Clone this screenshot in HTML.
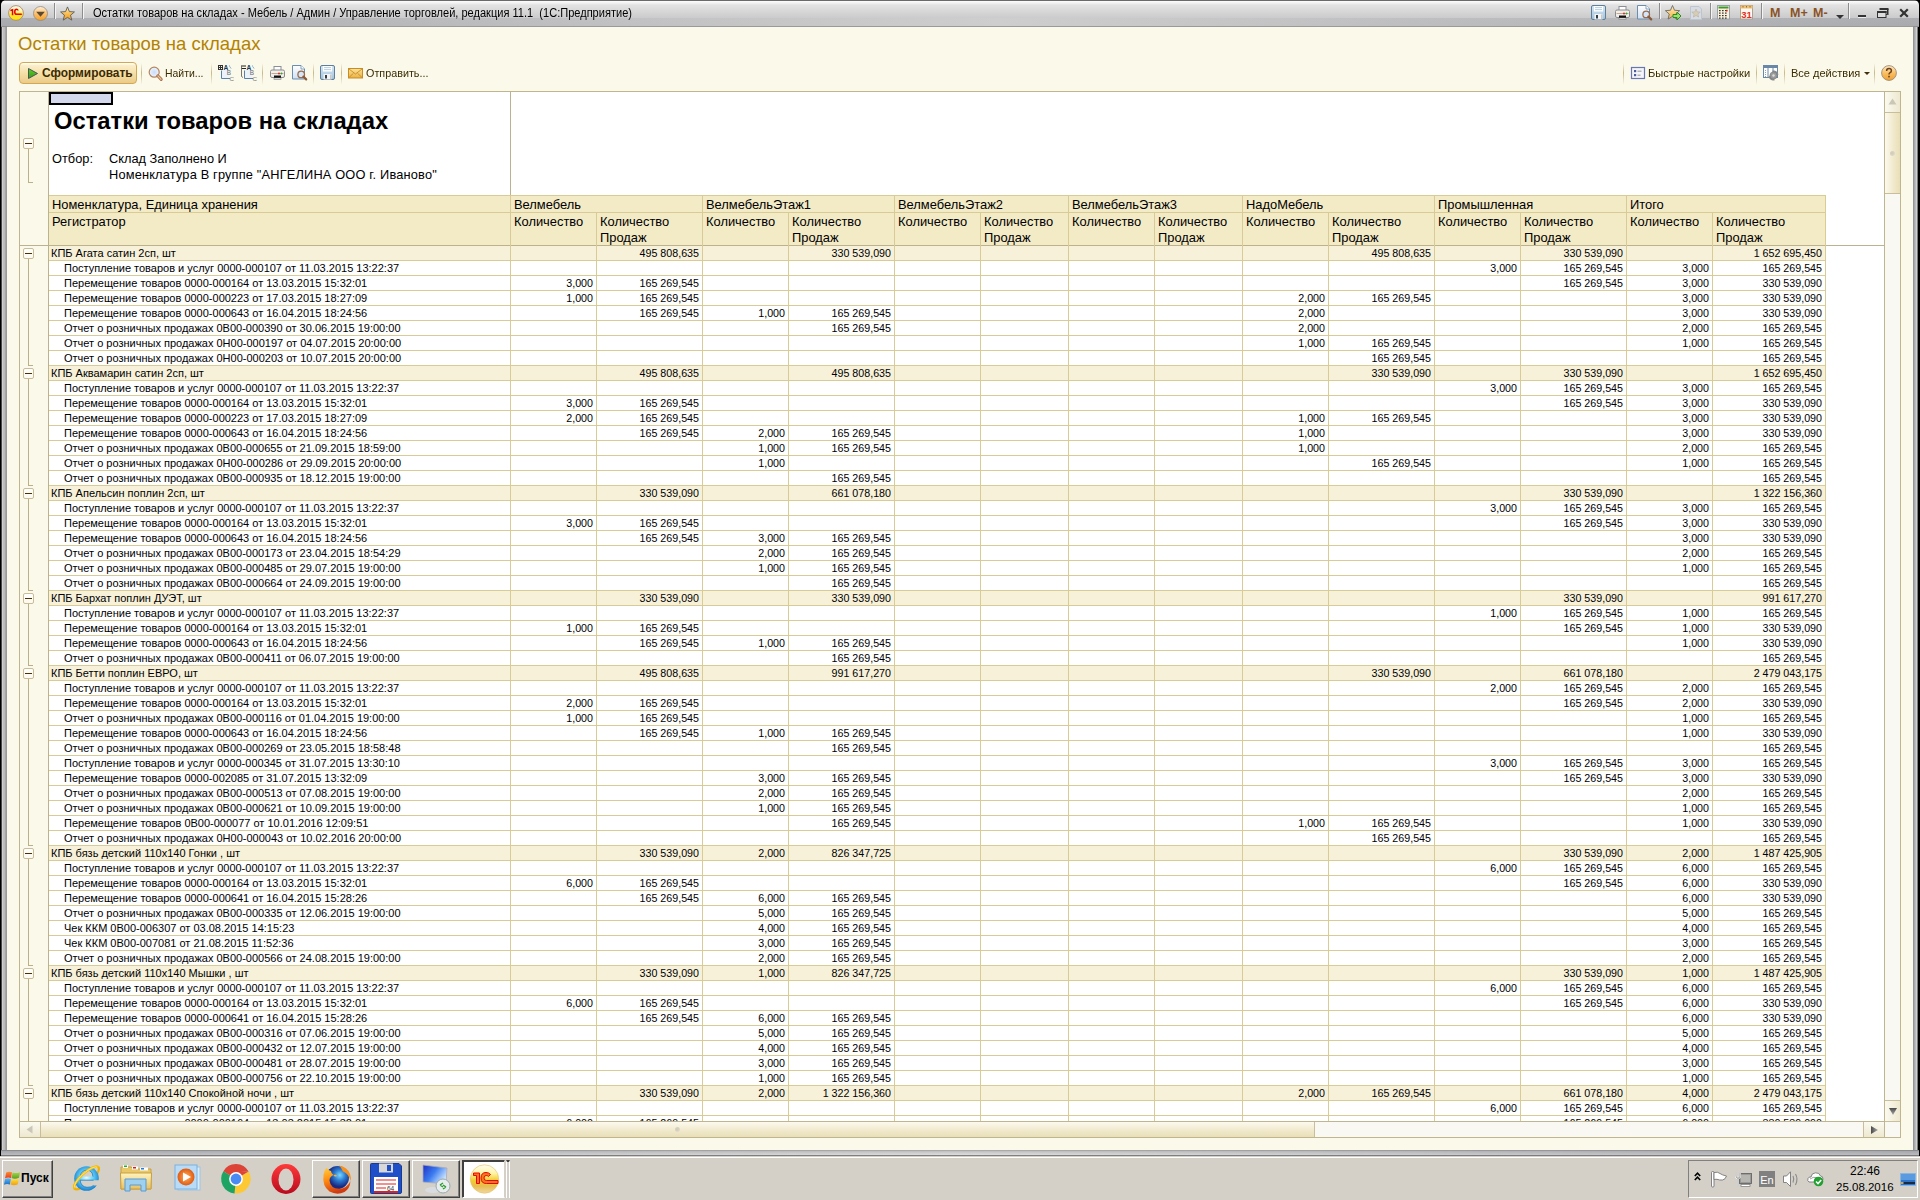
<!DOCTYPE html>
<html><head><meta charset="utf-8"><style>
html,body{margin:0;padding:0}
body{width:1920px;height:1200px;overflow:hidden;position:relative;background:#D4D0C8;font-family:"Liberation Sans",sans-serif;color:#000}
div{position:absolute;box-sizing:border-box}
.t{white-space:pre;line-height:15px;font-size:11px}
.r{text-align:right}
svg{position:absolute;overflow:visible}
</style></head><body>

<div style="left:0px;top:0px;width:1920px;height:1156px;background:#000"></div>
<div style="left:1px;top:0px;width:1917px;height:1156px;background:linear-gradient(90deg,#4a4a4a 0,#4a4a4a 1px,#d0d0d0 1px,#d0d0d0 2px,#c2c2c2 2px,#b8b8b8 4px,#a6a6a8 4px,#a6a6a8 5px,#9a9b9f 5px,#9a9b9f 6px,#a9aaae 6px);border-radius:6px 6px 0 0"></div>
<div style="left:1913px;top:27px;width:5px;height:1129px;background:linear-gradient(90deg,#959599 0,#959599 1px,#a8a9ad 1px,#a8a9ad 2px,#b8b9bb 2px,#b8b9bb 3px,#d0d0d0 3px,#d0d0d0 4px,#7a7a7a 4px)"></div>
<div style="left:1px;top:1150px;width:1918px;height:6px;background:linear-gradient(180deg,#8a8b8f 0,#8a8b8f 1px,#a6a7ab 1px,#babbbf 5px,#7a7a7c 5px)"></div>
<div style="left:1px;top:1150px;width:1918px;height:6px;background:linear-gradient(180deg,#ababad 0,#ababad 1px,#bebebe 1px,#d0d0d0 3px,#dddddd 5px,#808080 5px);-webkit-mask-image:linear-gradient(90deg,transparent 0%,#000 50%,transparent 100%)"></div>
<div style="left:1px;top:0px;width:1918px;height:27px;background:linear-gradient(180deg,#6a6a6a 0,#6a6a6a 1px,#fdfdfd 1px,#f2f2f2 3px,#e2e2e2 5px,#d6d6d6 12px,#cbcbcd 18px,#adaeb2 18px,#a9aaae 26px,#8f9094 26px);border-radius:5px 5px 0 0"></div>
<div style="left:1px;top:18px;width:1918px;height:9px;background:linear-gradient(90deg,rgba(206,206,206,0) 0%,rgba(206,206,206,1) 52%,rgba(206,206,206,0) 100%)"></div>
<div style="left:7px;top:26px;width:1906px;height:1px;background:#9a9a9c"></div>
<div style="left:7px;top:27px;width:1906px;height:1123px;background:#FBF9EA"></div>
<div style="left:0px;top:1156px;width:1920px;height:44px;background:#D4D0C8;border-top:1px solid #d4d0c8"></div>
<div style="left:0px;top:1157px;width:1920px;height:1px;background:#fff"></div>
<div class="t" style="left:93px;top:5px;font-size:12.5px;line-height:16px;color:#000;transform:scaleX(0.884);transform-origin:0 0">Остатки товаров на складах - Мебель / Админ / Управление торговлей, редакция 11.1  (1С:Предприятие)</div>
<div class="t" style="left:18px;top:33px;font-size:18.5px;line-height:22px;color:#B38200">Остатки товаров на складах</div>
<div style="left:19px;top:62px;width:118px;height:22px;border:1px solid #D4A852;border-radius:4px;background:linear-gradient(180deg,#FFFDF4 0,#FFFDF4 1px,#FBEFCC 2px,#F5E0A8 50%,#EACB88 100%)"></div>
<div class="t" style="left:42px;top:66px;font-size:11.9px;font-weight:bold;color:#3B2A00">Сформировать</div>
<div class="t" style="left:165px;top:65px;font-size:11.6px;color:#3A2C00;transform:scaleX(0.9);transform-origin:0 0">Найти...</div>
<div class="t" style="left:366px;top:65px;font-size:11.6px;color:#3A2C00;transform:scaleX(0.93);transform-origin:0 0">Отправить...</div>
<div class="t" style="left:1648px;top:65px;font-size:11.6px;color:#3A2C00;transform:scaleX(0.96);transform-origin:0 0">Быстрые настройки</div>
<div class="t" style="left:1791px;top:65px;font-size:11.6px;color:#3A2C00;transform:scaleX(0.95);transform-origin:0 0">Все действия</div>
<div style="left:141px;top:63px;width:1px;height:22px;background:linear-gradient(180deg,rgba(200,184,136,0) 0,#C9B98A 45%,rgba(200,184,136,0) 100%)"></div>
<div style="left:211px;top:63px;width:1px;height:22px;background:linear-gradient(180deg,rgba(200,184,136,0) 0,#C9B98A 45%,rgba(200,184,136,0) 100%)"></div>
<div style="left:262px;top:63px;width:1px;height:22px;background:linear-gradient(180deg,rgba(200,184,136,0) 0,#C9B98A 45%,rgba(200,184,136,0) 100%)"></div>
<div style="left:313px;top:63px;width:1px;height:22px;background:linear-gradient(180deg,rgba(200,184,136,0) 0,#C9B98A 45%,rgba(200,184,136,0) 100%)"></div>
<div style="left:341px;top:63px;width:1px;height:22px;background:linear-gradient(180deg,rgba(200,184,136,0) 0,#C9B98A 45%,rgba(200,184,136,0) 100%)"></div>
<div style="left:1623px;top:63px;width:1px;height:22px;background:linear-gradient(180deg,rgba(200,184,136,0) 0,#C9B98A 45%,rgba(200,184,136,0) 100%)"></div>
<div style="left:1756px;top:63px;width:1px;height:22px;background:linear-gradient(180deg,rgba(200,184,136,0) 0,#C9B98A 45%,rgba(200,184,136,0) 100%)"></div>
<div style="left:1784px;top:63px;width:1px;height:22px;background:linear-gradient(180deg,rgba(200,184,136,0) 0,#C9B98A 45%,rgba(200,184,136,0) 100%)"></div>
<div style="left:1874px;top:63px;width:1px;height:22px;background:linear-gradient(180deg,rgba(200,184,136,0) 0,#C9B98A 45%,rgba(200,184,136,0) 100%)"></div>
<div style="left:19px;top:91px;width:1882px;height:1047px;border:1px solid #BFB68F;background:#fff"></div>
<div style="left:20px;top:92px;width:28px;height:1029px;background:#FBF9EA"></div>
<div style="left:48px;top:92px;width:1px;height:1029px;background:#BCB38E"></div>
<div style="left:20px;top:92px;width:1865px;height:1029px;overflow:hidden">
<div style="left:29px;top:0px;width:64px;height:13px;border:2px solid #000;background:#D3D8EC"></div>
<div class="t" style="left:34px;top:14px;font-size:23.75px;font-weight:bold;line-height:30px">Остатки товаров на складах</div>
<div class="t" style="left:32px;top:59px;font-size:12.8px;line-height:16px">Отбор:</div>
<div class="t" style="left:89px;top:59px;font-size:12.8px;line-height:16px">Склад Заполнено И</div>
<div class="t" style="left:89px;top:75px;font-size:12.8px;line-height:16px;letter-spacing:0.17px">Номенклатура В группе &quot;АНГЕЛИНА ООО г. Иваново&quot;</div>
<div style="left:490px;top:0px;width:1px;height:103px;background:#BCB38E"></div>
<div style="left:29px;top:103px;width:1776px;height:50px;background:#F3EAC6"></div>
<div style="left:29px;top:103px;width:1777px;height:1px;background:#D9CB95"></div>
<div style="left:29px;top:120px;width:1777px;height:1px;background:#D9CB95"></div>
<div style="left:29px;top:154px;width:1776px;height:14px;background:#F7F1DA"></div>
<div style="left:29px;top:168px;width:1777px;height:1px;background:#D9CB95"></div>
<div style="left:29px;top:183px;width:1777px;height:1px;background:#D9CB95"></div>
<div style="left:29px;top:198px;width:1777px;height:1px;background:#D9CB95"></div>
<div style="left:29px;top:213px;width:1777px;height:1px;background:#D9CB95"></div>
<div style="left:29px;top:228px;width:1777px;height:1px;background:#D9CB95"></div>
<div style="left:29px;top:243px;width:1777px;height:1px;background:#D9CB95"></div>
<div style="left:29px;top:258px;width:1777px;height:1px;background:#D9CB95"></div>
<div style="left:29px;top:273px;width:1777px;height:1px;background:#D9CB95"></div>
<div style="left:29px;top:274px;width:1776px;height:14px;background:#F7F1DA"></div>
<div style="left:29px;top:288px;width:1777px;height:1px;background:#D9CB95"></div>
<div style="left:29px;top:303px;width:1777px;height:1px;background:#D9CB95"></div>
<div style="left:29px;top:318px;width:1777px;height:1px;background:#D9CB95"></div>
<div style="left:29px;top:333px;width:1777px;height:1px;background:#D9CB95"></div>
<div style="left:29px;top:348px;width:1777px;height:1px;background:#D9CB95"></div>
<div style="left:29px;top:363px;width:1777px;height:1px;background:#D9CB95"></div>
<div style="left:29px;top:378px;width:1777px;height:1px;background:#D9CB95"></div>
<div style="left:29px;top:393px;width:1777px;height:1px;background:#D9CB95"></div>
<div style="left:29px;top:394px;width:1776px;height:14px;background:#F7F1DA"></div>
<div style="left:29px;top:408px;width:1777px;height:1px;background:#D9CB95"></div>
<div style="left:29px;top:423px;width:1777px;height:1px;background:#D9CB95"></div>
<div style="left:29px;top:438px;width:1777px;height:1px;background:#D9CB95"></div>
<div style="left:29px;top:453px;width:1777px;height:1px;background:#D9CB95"></div>
<div style="left:29px;top:468px;width:1777px;height:1px;background:#D9CB95"></div>
<div style="left:29px;top:483px;width:1777px;height:1px;background:#D9CB95"></div>
<div style="left:29px;top:498px;width:1777px;height:1px;background:#D9CB95"></div>
<div style="left:29px;top:499px;width:1776px;height:14px;background:#F7F1DA"></div>
<div style="left:29px;top:513px;width:1777px;height:1px;background:#D9CB95"></div>
<div style="left:29px;top:528px;width:1777px;height:1px;background:#D9CB95"></div>
<div style="left:29px;top:543px;width:1777px;height:1px;background:#D9CB95"></div>
<div style="left:29px;top:558px;width:1777px;height:1px;background:#D9CB95"></div>
<div style="left:29px;top:573px;width:1777px;height:1px;background:#D9CB95"></div>
<div style="left:29px;top:574px;width:1776px;height:14px;background:#F7F1DA"></div>
<div style="left:29px;top:588px;width:1777px;height:1px;background:#D9CB95"></div>
<div style="left:29px;top:603px;width:1777px;height:1px;background:#D9CB95"></div>
<div style="left:29px;top:618px;width:1777px;height:1px;background:#D9CB95"></div>
<div style="left:29px;top:633px;width:1777px;height:1px;background:#D9CB95"></div>
<div style="left:29px;top:648px;width:1777px;height:1px;background:#D9CB95"></div>
<div style="left:29px;top:663px;width:1777px;height:1px;background:#D9CB95"></div>
<div style="left:29px;top:678px;width:1777px;height:1px;background:#D9CB95"></div>
<div style="left:29px;top:693px;width:1777px;height:1px;background:#D9CB95"></div>
<div style="left:29px;top:708px;width:1777px;height:1px;background:#D9CB95"></div>
<div style="left:29px;top:723px;width:1777px;height:1px;background:#D9CB95"></div>
<div style="left:29px;top:738px;width:1777px;height:1px;background:#D9CB95"></div>
<div style="left:29px;top:753px;width:1777px;height:1px;background:#D9CB95"></div>
<div style="left:29px;top:754px;width:1776px;height:14px;background:#F7F1DA"></div>
<div style="left:29px;top:768px;width:1777px;height:1px;background:#D9CB95"></div>
<div style="left:29px;top:783px;width:1777px;height:1px;background:#D9CB95"></div>
<div style="left:29px;top:798px;width:1777px;height:1px;background:#D9CB95"></div>
<div style="left:29px;top:813px;width:1777px;height:1px;background:#D9CB95"></div>
<div style="left:29px;top:828px;width:1777px;height:1px;background:#D9CB95"></div>
<div style="left:29px;top:843px;width:1777px;height:1px;background:#D9CB95"></div>
<div style="left:29px;top:858px;width:1777px;height:1px;background:#D9CB95"></div>
<div style="left:29px;top:873px;width:1777px;height:1px;background:#D9CB95"></div>
<div style="left:29px;top:874px;width:1776px;height:14px;background:#F7F1DA"></div>
<div style="left:29px;top:888px;width:1777px;height:1px;background:#D9CB95"></div>
<div style="left:29px;top:903px;width:1777px;height:1px;background:#D9CB95"></div>
<div style="left:29px;top:918px;width:1777px;height:1px;background:#D9CB95"></div>
<div style="left:29px;top:933px;width:1777px;height:1px;background:#D9CB95"></div>
<div style="left:29px;top:948px;width:1777px;height:1px;background:#D9CB95"></div>
<div style="left:29px;top:963px;width:1777px;height:1px;background:#D9CB95"></div>
<div style="left:29px;top:978px;width:1777px;height:1px;background:#D9CB95"></div>
<div style="left:29px;top:993px;width:1777px;height:1px;background:#D9CB95"></div>
<div style="left:29px;top:994px;width:1776px;height:14px;background:#F7F1DA"></div>
<div style="left:29px;top:1008px;width:1777px;height:1px;background:#D9CB95"></div>
<div style="left:29px;top:1023px;width:1777px;height:1px;background:#D9CB95"></div>
<div style="left:29px;top:1038px;width:1777px;height:1px;background:#D9CB95"></div>
<div style="left:0px;top:153px;width:1865px;height:1px;background:#BCB38E"></div>
<div style="left:490px;top:103px;width:1px;height:926px;background:#D9CB95"></div>
<div style="left:576px;top:120px;width:1px;height:909px;background:#D9CB95"></div>
<div style="left:682px;top:103px;width:1px;height:926px;background:#D9CB95"></div>
<div style="left:768px;top:120px;width:1px;height:909px;background:#D9CB95"></div>
<div style="left:874px;top:103px;width:1px;height:926px;background:#D9CB95"></div>
<div style="left:960px;top:120px;width:1px;height:909px;background:#D9CB95"></div>
<div style="left:1048px;top:103px;width:1px;height:926px;background:#D9CB95"></div>
<div style="left:1134px;top:120px;width:1px;height:909px;background:#D9CB95"></div>
<div style="left:1222px;top:103px;width:1px;height:926px;background:#D9CB95"></div>
<div style="left:1308px;top:120px;width:1px;height:909px;background:#D9CB95"></div>
<div style="left:1414px;top:103px;width:1px;height:926px;background:#D9CB95"></div>
<div style="left:1500px;top:120px;width:1px;height:909px;background:#D9CB95"></div>
<div style="left:1606px;top:103px;width:1px;height:926px;background:#D9CB95"></div>
<div style="left:1692px;top:120px;width:1px;height:909px;background:#D9CB95"></div>
<div style="left:1805px;top:103px;width:1px;height:926px;background:#D9CB95"></div>
<div class="t" style="left:32px;top:105px;font-size:12.9px;line-height:16px">Номенклатура, Единица хранения</div>
<div class="t" style="left:32px;top:122px;font-size:12.9px;line-height:16px">Регистратор</div>
<div class="t" style="left:494px;top:105px;font-size:12.9px;line-height:16px">Велмебель</div>
<div class="t" style="left:494px;top:122px;font-size:12.9px;line-height:16px">Количество</div>
<div class="t" style="left:580px;top:122px;font-size:12.9px;line-height:16px">Количество
Продаж</div>
<div class="t" style="left:686px;top:105px;font-size:12.9px;line-height:16px">ВелмебельЭтаж1</div>
<div class="t" style="left:686px;top:122px;font-size:12.9px;line-height:16px">Количество</div>
<div class="t" style="left:772px;top:122px;font-size:12.9px;line-height:16px">Количество
Продаж</div>
<div class="t" style="left:878px;top:105px;font-size:12.9px;line-height:16px">ВелмебельЭтаж2</div>
<div class="t" style="left:878px;top:122px;font-size:12.9px;line-height:16px">Количество</div>
<div class="t" style="left:964px;top:122px;font-size:12.9px;line-height:16px">Количество
Продаж</div>
<div class="t" style="left:1052px;top:105px;font-size:12.9px;line-height:16px">ВелмебельЭтаж3</div>
<div class="t" style="left:1052px;top:122px;font-size:12.9px;line-height:16px">Количество</div>
<div class="t" style="left:1138px;top:122px;font-size:12.9px;line-height:16px">Количество
Продаж</div>
<div class="t" style="left:1226px;top:105px;font-size:12.9px;line-height:16px">НадоМебель</div>
<div class="t" style="left:1226px;top:122px;font-size:12.9px;line-height:16px">Количество</div>
<div class="t" style="left:1312px;top:122px;font-size:12.9px;line-height:16px">Количество
Продаж</div>
<div class="t" style="left:1418px;top:105px;font-size:12.9px;line-height:16px">Промышленная</div>
<div class="t" style="left:1418px;top:122px;font-size:12.9px;line-height:16px">Количество</div>
<div class="t" style="left:1504px;top:122px;font-size:12.9px;line-height:16px">Количество
Продаж</div>
<div class="t" style="left:1610px;top:105px;font-size:12.9px;line-height:16px">Итого</div>
<div class="t" style="left:1610px;top:122px;font-size:12.9px;line-height:16px">Количество</div>
<div class="t" style="left:1696px;top:122px;font-size:12.9px;line-height:16px">Количество
Продаж</div>
<div class="t" style="left:31px;top:154px;">КПБ Агата сатин 2сп, шт</div>
<div class="t r" style="left:379px;top:154px;width:300px;font-size:10.7px">495 808,635</div>
<div class="t r" style="left:571px;top:154px;width:300px;font-size:10.7px">330 539,090</div>
<div class="t r" style="left:1111px;top:154px;width:300px;font-size:10.7px">495 808,635</div>
<div class="t r" style="left:1303px;top:154px;width:300px;font-size:10.7px">330 539,090</div>
<div class="t r" style="left:1502px;top:154px;width:300px;font-size:10.7px">1 652 695,450</div>
<div class="t" style="left:44px;top:169px;">Поступление товаров и услуг 0000-000107 от 11.03.2015 13:22:37</div>
<div class="t r" style="left:1197px;top:169px;width:300px;font-size:10.7px">3,000</div>
<div class="t r" style="left:1303px;top:169px;width:300px;font-size:10.7px">165 269,545</div>
<div class="t r" style="left:1389px;top:169px;width:300px;font-size:10.7px">3,000</div>
<div class="t r" style="left:1502px;top:169px;width:300px;font-size:10.7px">165 269,545</div>
<div class="t" style="left:44px;top:184px;">Перемещение товаров 0000-000164 от 13.03.2015 15:32:01</div>
<div class="t r" style="left:273px;top:184px;width:300px;font-size:10.7px">3,000</div>
<div class="t r" style="left:379px;top:184px;width:300px;font-size:10.7px">165 269,545</div>
<div class="t r" style="left:1303px;top:184px;width:300px;font-size:10.7px">165 269,545</div>
<div class="t r" style="left:1389px;top:184px;width:300px;font-size:10.7px">3,000</div>
<div class="t r" style="left:1502px;top:184px;width:300px;font-size:10.7px">330 539,090</div>
<div class="t" style="left:44px;top:199px;">Перемещение товаров 0000-000223 от 17.03.2015 18:27:09</div>
<div class="t r" style="left:273px;top:199px;width:300px;font-size:10.7px">1,000</div>
<div class="t r" style="left:379px;top:199px;width:300px;font-size:10.7px">165 269,545</div>
<div class="t r" style="left:1005px;top:199px;width:300px;font-size:10.7px">2,000</div>
<div class="t r" style="left:1111px;top:199px;width:300px;font-size:10.7px">165 269,545</div>
<div class="t r" style="left:1389px;top:199px;width:300px;font-size:10.7px">3,000</div>
<div class="t r" style="left:1502px;top:199px;width:300px;font-size:10.7px">330 539,090</div>
<div class="t" style="left:44px;top:214px;">Перемещение товаров 0000-000643 от 16.04.2015 18:24:56</div>
<div class="t r" style="left:379px;top:214px;width:300px;font-size:10.7px">165 269,545</div>
<div class="t r" style="left:465px;top:214px;width:300px;font-size:10.7px">1,000</div>
<div class="t r" style="left:571px;top:214px;width:300px;font-size:10.7px">165 269,545</div>
<div class="t r" style="left:1005px;top:214px;width:300px;font-size:10.7px">2,000</div>
<div class="t r" style="left:1389px;top:214px;width:300px;font-size:10.7px">3,000</div>
<div class="t r" style="left:1502px;top:214px;width:300px;font-size:10.7px">330 539,090</div>
<div class="t" style="left:44px;top:229px;">Отчет о розничных продажах 0В00-000390 от 30.06.2015 19:00:00</div>
<div class="t r" style="left:571px;top:229px;width:300px;font-size:10.7px">165 269,545</div>
<div class="t r" style="left:1005px;top:229px;width:300px;font-size:10.7px">2,000</div>
<div class="t r" style="left:1389px;top:229px;width:300px;font-size:10.7px">2,000</div>
<div class="t r" style="left:1502px;top:229px;width:300px;font-size:10.7px">165 269,545</div>
<div class="t" style="left:44px;top:244px;">Отчет о розничных продажах 0Н00-000197 от 04.07.2015 20:00:00</div>
<div class="t r" style="left:1005px;top:244px;width:300px;font-size:10.7px">1,000</div>
<div class="t r" style="left:1111px;top:244px;width:300px;font-size:10.7px">165 269,545</div>
<div class="t r" style="left:1389px;top:244px;width:300px;font-size:10.7px">1,000</div>
<div class="t r" style="left:1502px;top:244px;width:300px;font-size:10.7px">165 269,545</div>
<div class="t" style="left:44px;top:259px;">Отчет о розничных продажах 0Н00-000203 от 10.07.2015 20:00:00</div>
<div class="t r" style="left:1111px;top:259px;width:300px;font-size:10.7px">165 269,545</div>
<div class="t r" style="left:1502px;top:259px;width:300px;font-size:10.7px">165 269,545</div>
<div class="t" style="left:31px;top:274px;">КПБ Аквамарин сатин 2сп, шт</div>
<div class="t r" style="left:379px;top:274px;width:300px;font-size:10.7px">495 808,635</div>
<div class="t r" style="left:571px;top:274px;width:300px;font-size:10.7px">495 808,635</div>
<div class="t r" style="left:1111px;top:274px;width:300px;font-size:10.7px">330 539,090</div>
<div class="t r" style="left:1303px;top:274px;width:300px;font-size:10.7px">330 539,090</div>
<div class="t r" style="left:1502px;top:274px;width:300px;font-size:10.7px">1 652 695,450</div>
<div class="t" style="left:44px;top:289px;">Поступление товаров и услуг 0000-000107 от 11.03.2015 13:22:37</div>
<div class="t r" style="left:1197px;top:289px;width:300px;font-size:10.7px">3,000</div>
<div class="t r" style="left:1303px;top:289px;width:300px;font-size:10.7px">165 269,545</div>
<div class="t r" style="left:1389px;top:289px;width:300px;font-size:10.7px">3,000</div>
<div class="t r" style="left:1502px;top:289px;width:300px;font-size:10.7px">165 269,545</div>
<div class="t" style="left:44px;top:304px;">Перемещение товаров 0000-000164 от 13.03.2015 15:32:01</div>
<div class="t r" style="left:273px;top:304px;width:300px;font-size:10.7px">3,000</div>
<div class="t r" style="left:379px;top:304px;width:300px;font-size:10.7px">165 269,545</div>
<div class="t r" style="left:1303px;top:304px;width:300px;font-size:10.7px">165 269,545</div>
<div class="t r" style="left:1389px;top:304px;width:300px;font-size:10.7px">3,000</div>
<div class="t r" style="left:1502px;top:304px;width:300px;font-size:10.7px">330 539,090</div>
<div class="t" style="left:44px;top:319px;">Перемещение товаров 0000-000223 от 17.03.2015 18:27:09</div>
<div class="t r" style="left:273px;top:319px;width:300px;font-size:10.7px">2,000</div>
<div class="t r" style="left:379px;top:319px;width:300px;font-size:10.7px">165 269,545</div>
<div class="t r" style="left:1005px;top:319px;width:300px;font-size:10.7px">1,000</div>
<div class="t r" style="left:1111px;top:319px;width:300px;font-size:10.7px">165 269,545</div>
<div class="t r" style="left:1389px;top:319px;width:300px;font-size:10.7px">3,000</div>
<div class="t r" style="left:1502px;top:319px;width:300px;font-size:10.7px">330 539,090</div>
<div class="t" style="left:44px;top:334px;">Перемещение товаров 0000-000643 от 16.04.2015 18:24:56</div>
<div class="t r" style="left:379px;top:334px;width:300px;font-size:10.7px">165 269,545</div>
<div class="t r" style="left:465px;top:334px;width:300px;font-size:10.7px">2,000</div>
<div class="t r" style="left:571px;top:334px;width:300px;font-size:10.7px">165 269,545</div>
<div class="t r" style="left:1005px;top:334px;width:300px;font-size:10.7px">1,000</div>
<div class="t r" style="left:1389px;top:334px;width:300px;font-size:10.7px">3,000</div>
<div class="t r" style="left:1502px;top:334px;width:300px;font-size:10.7px">330 539,090</div>
<div class="t" style="left:44px;top:349px;">Отчет о розничных продажах 0В00-000655 от 21.09.2015 18:59:00</div>
<div class="t r" style="left:465px;top:349px;width:300px;font-size:10.7px">1,000</div>
<div class="t r" style="left:571px;top:349px;width:300px;font-size:10.7px">165 269,545</div>
<div class="t r" style="left:1005px;top:349px;width:300px;font-size:10.7px">1,000</div>
<div class="t r" style="left:1389px;top:349px;width:300px;font-size:10.7px">2,000</div>
<div class="t r" style="left:1502px;top:349px;width:300px;font-size:10.7px">165 269,545</div>
<div class="t" style="left:44px;top:364px;">Отчет о розничных продажах 0Н00-000286 от 29.09.2015 20:00:00</div>
<div class="t r" style="left:465px;top:364px;width:300px;font-size:10.7px">1,000</div>
<div class="t r" style="left:1111px;top:364px;width:300px;font-size:10.7px">165 269,545</div>
<div class="t r" style="left:1389px;top:364px;width:300px;font-size:10.7px">1,000</div>
<div class="t r" style="left:1502px;top:364px;width:300px;font-size:10.7px">165 269,545</div>
<div class="t" style="left:44px;top:379px;">Отчет о розничных продажах 0В00-000935 от 18.12.2015 19:00:00</div>
<div class="t r" style="left:571px;top:379px;width:300px;font-size:10.7px">165 269,545</div>
<div class="t r" style="left:1502px;top:379px;width:300px;font-size:10.7px">165 269,545</div>
<div class="t" style="left:31px;top:394px;">КПБ Апельсин поплин 2сп, шт</div>
<div class="t r" style="left:379px;top:394px;width:300px;font-size:10.7px">330 539,090</div>
<div class="t r" style="left:571px;top:394px;width:300px;font-size:10.7px">661 078,180</div>
<div class="t r" style="left:1303px;top:394px;width:300px;font-size:10.7px">330 539,090</div>
<div class="t r" style="left:1502px;top:394px;width:300px;font-size:10.7px">1 322 156,360</div>
<div class="t" style="left:44px;top:409px;">Поступление товаров и услуг 0000-000107 от 11.03.2015 13:22:37</div>
<div class="t r" style="left:1197px;top:409px;width:300px;font-size:10.7px">3,000</div>
<div class="t r" style="left:1303px;top:409px;width:300px;font-size:10.7px">165 269,545</div>
<div class="t r" style="left:1389px;top:409px;width:300px;font-size:10.7px">3,000</div>
<div class="t r" style="left:1502px;top:409px;width:300px;font-size:10.7px">165 269,545</div>
<div class="t" style="left:44px;top:424px;">Перемещение товаров 0000-000164 от 13.03.2015 15:32:01</div>
<div class="t r" style="left:273px;top:424px;width:300px;font-size:10.7px">3,000</div>
<div class="t r" style="left:379px;top:424px;width:300px;font-size:10.7px">165 269,545</div>
<div class="t r" style="left:1303px;top:424px;width:300px;font-size:10.7px">165 269,545</div>
<div class="t r" style="left:1389px;top:424px;width:300px;font-size:10.7px">3,000</div>
<div class="t r" style="left:1502px;top:424px;width:300px;font-size:10.7px">330 539,090</div>
<div class="t" style="left:44px;top:439px;">Перемещение товаров 0000-000643 от 16.04.2015 18:24:56</div>
<div class="t r" style="left:379px;top:439px;width:300px;font-size:10.7px">165 269,545</div>
<div class="t r" style="left:465px;top:439px;width:300px;font-size:10.7px">3,000</div>
<div class="t r" style="left:571px;top:439px;width:300px;font-size:10.7px">165 269,545</div>
<div class="t r" style="left:1389px;top:439px;width:300px;font-size:10.7px">3,000</div>
<div class="t r" style="left:1502px;top:439px;width:300px;font-size:10.7px">330 539,090</div>
<div class="t" style="left:44px;top:454px;">Отчет о розничных продажах 0В00-000173 от 23.04.2015 18:54:29</div>
<div class="t r" style="left:465px;top:454px;width:300px;font-size:10.7px">2,000</div>
<div class="t r" style="left:571px;top:454px;width:300px;font-size:10.7px">165 269,545</div>
<div class="t r" style="left:1389px;top:454px;width:300px;font-size:10.7px">2,000</div>
<div class="t r" style="left:1502px;top:454px;width:300px;font-size:10.7px">165 269,545</div>
<div class="t" style="left:44px;top:469px;">Отчет о розничных продажах 0В00-000485 от 29.07.2015 19:00:00</div>
<div class="t r" style="left:465px;top:469px;width:300px;font-size:10.7px">1,000</div>
<div class="t r" style="left:571px;top:469px;width:300px;font-size:10.7px">165 269,545</div>
<div class="t r" style="left:1389px;top:469px;width:300px;font-size:10.7px">1,000</div>
<div class="t r" style="left:1502px;top:469px;width:300px;font-size:10.7px">165 269,545</div>
<div class="t" style="left:44px;top:484px;">Отчет о розничных продажах 0В00-000664 от 24.09.2015 19:00:00</div>
<div class="t r" style="left:571px;top:484px;width:300px;font-size:10.7px">165 269,545</div>
<div class="t r" style="left:1502px;top:484px;width:300px;font-size:10.7px">165 269,545</div>
<div class="t" style="left:31px;top:499px;">КПБ Бархат поплин ДУЭТ, шт</div>
<div class="t r" style="left:379px;top:499px;width:300px;font-size:10.7px">330 539,090</div>
<div class="t r" style="left:571px;top:499px;width:300px;font-size:10.7px">330 539,090</div>
<div class="t r" style="left:1303px;top:499px;width:300px;font-size:10.7px">330 539,090</div>
<div class="t r" style="left:1502px;top:499px;width:300px;font-size:10.7px">991 617,270</div>
<div class="t" style="left:44px;top:514px;">Поступление товаров и услуг 0000-000107 от 11.03.2015 13:22:37</div>
<div class="t r" style="left:1197px;top:514px;width:300px;font-size:10.7px">1,000</div>
<div class="t r" style="left:1303px;top:514px;width:300px;font-size:10.7px">165 269,545</div>
<div class="t r" style="left:1389px;top:514px;width:300px;font-size:10.7px">1,000</div>
<div class="t r" style="left:1502px;top:514px;width:300px;font-size:10.7px">165 269,545</div>
<div class="t" style="left:44px;top:529px;">Перемещение товаров 0000-000164 от 13.03.2015 15:32:01</div>
<div class="t r" style="left:273px;top:529px;width:300px;font-size:10.7px">1,000</div>
<div class="t r" style="left:379px;top:529px;width:300px;font-size:10.7px">165 269,545</div>
<div class="t r" style="left:1303px;top:529px;width:300px;font-size:10.7px">165 269,545</div>
<div class="t r" style="left:1389px;top:529px;width:300px;font-size:10.7px">1,000</div>
<div class="t r" style="left:1502px;top:529px;width:300px;font-size:10.7px">330 539,090</div>
<div class="t" style="left:44px;top:544px;">Перемещение товаров 0000-000643 от 16.04.2015 18:24:56</div>
<div class="t r" style="left:379px;top:544px;width:300px;font-size:10.7px">165 269,545</div>
<div class="t r" style="left:465px;top:544px;width:300px;font-size:10.7px">1,000</div>
<div class="t r" style="left:571px;top:544px;width:300px;font-size:10.7px">165 269,545</div>
<div class="t r" style="left:1389px;top:544px;width:300px;font-size:10.7px">1,000</div>
<div class="t r" style="left:1502px;top:544px;width:300px;font-size:10.7px">330 539,090</div>
<div class="t" style="left:44px;top:559px;">Отчет о розничных продажах 0В00-000411 от 06.07.2015 19:00:00</div>
<div class="t r" style="left:571px;top:559px;width:300px;font-size:10.7px">165 269,545</div>
<div class="t r" style="left:1502px;top:559px;width:300px;font-size:10.7px">165 269,545</div>
<div class="t" style="left:31px;top:574px;">КПБ Бетти поплин ЕВРО, шт</div>
<div class="t r" style="left:379px;top:574px;width:300px;font-size:10.7px">495 808,635</div>
<div class="t r" style="left:571px;top:574px;width:300px;font-size:10.7px">991 617,270</div>
<div class="t r" style="left:1111px;top:574px;width:300px;font-size:10.7px">330 539,090</div>
<div class="t r" style="left:1303px;top:574px;width:300px;font-size:10.7px">661 078,180</div>
<div class="t r" style="left:1502px;top:574px;width:300px;font-size:10.7px">2 479 043,175</div>
<div class="t" style="left:44px;top:589px;">Поступление товаров и услуг 0000-000107 от 11.03.2015 13:22:37</div>
<div class="t r" style="left:1197px;top:589px;width:300px;font-size:10.7px">2,000</div>
<div class="t r" style="left:1303px;top:589px;width:300px;font-size:10.7px">165 269,545</div>
<div class="t r" style="left:1389px;top:589px;width:300px;font-size:10.7px">2,000</div>
<div class="t r" style="left:1502px;top:589px;width:300px;font-size:10.7px">165 269,545</div>
<div class="t" style="left:44px;top:604px;">Перемещение товаров 0000-000164 от 13.03.2015 15:32:01</div>
<div class="t r" style="left:273px;top:604px;width:300px;font-size:10.7px">2,000</div>
<div class="t r" style="left:379px;top:604px;width:300px;font-size:10.7px">165 269,545</div>
<div class="t r" style="left:1303px;top:604px;width:300px;font-size:10.7px">165 269,545</div>
<div class="t r" style="left:1389px;top:604px;width:300px;font-size:10.7px">2,000</div>
<div class="t r" style="left:1502px;top:604px;width:300px;font-size:10.7px">330 539,090</div>
<div class="t" style="left:44px;top:619px;">Отчет о розничных продажах 0В00-000116 от 01.04.2015 19:00:00</div>
<div class="t r" style="left:273px;top:619px;width:300px;font-size:10.7px">1,000</div>
<div class="t r" style="left:379px;top:619px;width:300px;font-size:10.7px">165 269,545</div>
<div class="t r" style="left:1389px;top:619px;width:300px;font-size:10.7px">1,000</div>
<div class="t r" style="left:1502px;top:619px;width:300px;font-size:10.7px">165 269,545</div>
<div class="t" style="left:44px;top:634px;">Перемещение товаров 0000-000643 от 16.04.2015 18:24:56</div>
<div class="t r" style="left:379px;top:634px;width:300px;font-size:10.7px">165 269,545</div>
<div class="t r" style="left:465px;top:634px;width:300px;font-size:10.7px">1,000</div>
<div class="t r" style="left:571px;top:634px;width:300px;font-size:10.7px">165 269,545</div>
<div class="t r" style="left:1389px;top:634px;width:300px;font-size:10.7px">1,000</div>
<div class="t r" style="left:1502px;top:634px;width:300px;font-size:10.7px">330 539,090</div>
<div class="t" style="left:44px;top:649px;">Отчет о розничных продажах 0В00-000269 от 23.05.2015 18:58:48</div>
<div class="t r" style="left:571px;top:649px;width:300px;font-size:10.7px">165 269,545</div>
<div class="t r" style="left:1502px;top:649px;width:300px;font-size:10.7px">165 269,545</div>
<div class="t" style="left:44px;top:664px;">Поступление товаров и услуг 0000-000345 от 31.07.2015 13:30:10</div>
<div class="t r" style="left:1197px;top:664px;width:300px;font-size:10.7px">3,000</div>
<div class="t r" style="left:1303px;top:664px;width:300px;font-size:10.7px">165 269,545</div>
<div class="t r" style="left:1389px;top:664px;width:300px;font-size:10.7px">3,000</div>
<div class="t r" style="left:1502px;top:664px;width:300px;font-size:10.7px">165 269,545</div>
<div class="t" style="left:44px;top:679px;">Перемещение товаров 0000-002085 от 31.07.2015 13:32:09</div>
<div class="t r" style="left:465px;top:679px;width:300px;font-size:10.7px">3,000</div>
<div class="t r" style="left:571px;top:679px;width:300px;font-size:10.7px">165 269,545</div>
<div class="t r" style="left:1303px;top:679px;width:300px;font-size:10.7px">165 269,545</div>
<div class="t r" style="left:1389px;top:679px;width:300px;font-size:10.7px">3,000</div>
<div class="t r" style="left:1502px;top:679px;width:300px;font-size:10.7px">330 539,090</div>
<div class="t" style="left:44px;top:694px;">Отчет о розничных продажах 0В00-000513 от 07.08.2015 19:00:00</div>
<div class="t r" style="left:465px;top:694px;width:300px;font-size:10.7px">2,000</div>
<div class="t r" style="left:571px;top:694px;width:300px;font-size:10.7px">165 269,545</div>
<div class="t r" style="left:1389px;top:694px;width:300px;font-size:10.7px">2,000</div>
<div class="t r" style="left:1502px;top:694px;width:300px;font-size:10.7px">165 269,545</div>
<div class="t" style="left:44px;top:709px;">Отчет о розничных продажах 0В00-000621 от 10.09.2015 19:00:00</div>
<div class="t r" style="left:465px;top:709px;width:300px;font-size:10.7px">1,000</div>
<div class="t r" style="left:571px;top:709px;width:300px;font-size:10.7px">165 269,545</div>
<div class="t r" style="left:1389px;top:709px;width:300px;font-size:10.7px">1,000</div>
<div class="t r" style="left:1502px;top:709px;width:300px;font-size:10.7px">165 269,545</div>
<div class="t" style="left:44px;top:724px;">Перемещение товаров 0В00-000077 от 10.01.2016 12:09:51</div>
<div class="t r" style="left:571px;top:724px;width:300px;font-size:10.7px">165 269,545</div>
<div class="t r" style="left:1005px;top:724px;width:300px;font-size:10.7px">1,000</div>
<div class="t r" style="left:1111px;top:724px;width:300px;font-size:10.7px">165 269,545</div>
<div class="t r" style="left:1389px;top:724px;width:300px;font-size:10.7px">1,000</div>
<div class="t r" style="left:1502px;top:724px;width:300px;font-size:10.7px">330 539,090</div>
<div class="t" style="left:44px;top:739px;">Отчет о розничных продажах 0Н00-000043 от 10.02.2016 20:00:00</div>
<div class="t r" style="left:1111px;top:739px;width:300px;font-size:10.7px">165 269,545</div>
<div class="t r" style="left:1502px;top:739px;width:300px;font-size:10.7px">165 269,545</div>
<div class="t" style="left:31px;top:754px;">КПБ бязь детский 110x140 Гонки , шт</div>
<div class="t r" style="left:379px;top:754px;width:300px;font-size:10.7px">330 539,090</div>
<div class="t r" style="left:465px;top:754px;width:300px;font-size:10.7px">2,000</div>
<div class="t r" style="left:571px;top:754px;width:300px;font-size:10.7px">826 347,725</div>
<div class="t r" style="left:1303px;top:754px;width:300px;font-size:10.7px">330 539,090</div>
<div class="t r" style="left:1389px;top:754px;width:300px;font-size:10.7px">2,000</div>
<div class="t r" style="left:1502px;top:754px;width:300px;font-size:10.7px">1 487 425,905</div>
<div class="t" style="left:44px;top:769px;">Поступление товаров и услуг 0000-000107 от 11.03.2015 13:22:37</div>
<div class="t r" style="left:1197px;top:769px;width:300px;font-size:10.7px">6,000</div>
<div class="t r" style="left:1303px;top:769px;width:300px;font-size:10.7px">165 269,545</div>
<div class="t r" style="left:1389px;top:769px;width:300px;font-size:10.7px">6,000</div>
<div class="t r" style="left:1502px;top:769px;width:300px;font-size:10.7px">165 269,545</div>
<div class="t" style="left:44px;top:784px;">Перемещение товаров 0000-000164 от 13.03.2015 15:32:01</div>
<div class="t r" style="left:273px;top:784px;width:300px;font-size:10.7px">6,000</div>
<div class="t r" style="left:379px;top:784px;width:300px;font-size:10.7px">165 269,545</div>
<div class="t r" style="left:1303px;top:784px;width:300px;font-size:10.7px">165 269,545</div>
<div class="t r" style="left:1389px;top:784px;width:300px;font-size:10.7px">6,000</div>
<div class="t r" style="left:1502px;top:784px;width:300px;font-size:10.7px">330 539,090</div>
<div class="t" style="left:44px;top:799px;">Перемещение товаров 0000-000641 от 16.04.2015 15:28:26</div>
<div class="t r" style="left:379px;top:799px;width:300px;font-size:10.7px">165 269,545</div>
<div class="t r" style="left:465px;top:799px;width:300px;font-size:10.7px">6,000</div>
<div class="t r" style="left:571px;top:799px;width:300px;font-size:10.7px">165 269,545</div>
<div class="t r" style="left:1389px;top:799px;width:300px;font-size:10.7px">6,000</div>
<div class="t r" style="left:1502px;top:799px;width:300px;font-size:10.7px">330 539,090</div>
<div class="t" style="left:44px;top:814px;">Отчет о розничных продажах 0В00-000335 от 12.06.2015 19:00:00</div>
<div class="t r" style="left:465px;top:814px;width:300px;font-size:10.7px">5,000</div>
<div class="t r" style="left:571px;top:814px;width:300px;font-size:10.7px">165 269,545</div>
<div class="t r" style="left:1389px;top:814px;width:300px;font-size:10.7px">5,000</div>
<div class="t r" style="left:1502px;top:814px;width:300px;font-size:10.7px">165 269,545</div>
<div class="t" style="left:44px;top:829px;">Чек ККМ 0В00-006307 от 03.08.2015 14:15:23</div>
<div class="t r" style="left:465px;top:829px;width:300px;font-size:10.7px">4,000</div>
<div class="t r" style="left:571px;top:829px;width:300px;font-size:10.7px">165 269,545</div>
<div class="t r" style="left:1389px;top:829px;width:300px;font-size:10.7px">4,000</div>
<div class="t r" style="left:1502px;top:829px;width:300px;font-size:10.7px">165 269,545</div>
<div class="t" style="left:44px;top:844px;">Чек ККМ 0В00-007081 от 21.08.2015 11:52:36</div>
<div class="t r" style="left:465px;top:844px;width:300px;font-size:10.7px">3,000</div>
<div class="t r" style="left:571px;top:844px;width:300px;font-size:10.7px">165 269,545</div>
<div class="t r" style="left:1389px;top:844px;width:300px;font-size:10.7px">3,000</div>
<div class="t r" style="left:1502px;top:844px;width:300px;font-size:10.7px">165 269,545</div>
<div class="t" style="left:44px;top:859px;">Отчет о розничных продажах 0В00-000566 от 24.08.2015 19:00:00</div>
<div class="t r" style="left:465px;top:859px;width:300px;font-size:10.7px">2,000</div>
<div class="t r" style="left:571px;top:859px;width:300px;font-size:10.7px">165 269,545</div>
<div class="t r" style="left:1389px;top:859px;width:300px;font-size:10.7px">2,000</div>
<div class="t r" style="left:1502px;top:859px;width:300px;font-size:10.7px">165 269,545</div>
<div class="t" style="left:31px;top:874px;">КПБ бязь детский 110x140 Мышки , шт</div>
<div class="t r" style="left:379px;top:874px;width:300px;font-size:10.7px">330 539,090</div>
<div class="t r" style="left:465px;top:874px;width:300px;font-size:10.7px">1,000</div>
<div class="t r" style="left:571px;top:874px;width:300px;font-size:10.7px">826 347,725</div>
<div class="t r" style="left:1303px;top:874px;width:300px;font-size:10.7px">330 539,090</div>
<div class="t r" style="left:1389px;top:874px;width:300px;font-size:10.7px">1,000</div>
<div class="t r" style="left:1502px;top:874px;width:300px;font-size:10.7px">1 487 425,905</div>
<div class="t" style="left:44px;top:889px;">Поступление товаров и услуг 0000-000107 от 11.03.2015 13:22:37</div>
<div class="t r" style="left:1197px;top:889px;width:300px;font-size:10.7px">6,000</div>
<div class="t r" style="left:1303px;top:889px;width:300px;font-size:10.7px">165 269,545</div>
<div class="t r" style="left:1389px;top:889px;width:300px;font-size:10.7px">6,000</div>
<div class="t r" style="left:1502px;top:889px;width:300px;font-size:10.7px">165 269,545</div>
<div class="t" style="left:44px;top:904px;">Перемещение товаров 0000-000164 от 13.03.2015 15:32:01</div>
<div class="t r" style="left:273px;top:904px;width:300px;font-size:10.7px">6,000</div>
<div class="t r" style="left:379px;top:904px;width:300px;font-size:10.7px">165 269,545</div>
<div class="t r" style="left:1303px;top:904px;width:300px;font-size:10.7px">165 269,545</div>
<div class="t r" style="left:1389px;top:904px;width:300px;font-size:10.7px">6,000</div>
<div class="t r" style="left:1502px;top:904px;width:300px;font-size:10.7px">330 539,090</div>
<div class="t" style="left:44px;top:919px;">Перемещение товаров 0000-000641 от 16.04.2015 15:28:26</div>
<div class="t r" style="left:379px;top:919px;width:300px;font-size:10.7px">165 269,545</div>
<div class="t r" style="left:465px;top:919px;width:300px;font-size:10.7px">6,000</div>
<div class="t r" style="left:571px;top:919px;width:300px;font-size:10.7px">165 269,545</div>
<div class="t r" style="left:1389px;top:919px;width:300px;font-size:10.7px">6,000</div>
<div class="t r" style="left:1502px;top:919px;width:300px;font-size:10.7px">330 539,090</div>
<div class="t" style="left:44px;top:934px;">Отчет о розничных продажах 0В00-000316 от 07.06.2015 19:00:00</div>
<div class="t r" style="left:465px;top:934px;width:300px;font-size:10.7px">5,000</div>
<div class="t r" style="left:571px;top:934px;width:300px;font-size:10.7px">165 269,545</div>
<div class="t r" style="left:1389px;top:934px;width:300px;font-size:10.7px">5,000</div>
<div class="t r" style="left:1502px;top:934px;width:300px;font-size:10.7px">165 269,545</div>
<div class="t" style="left:44px;top:949px;">Отчет о розничных продажах 0В00-000432 от 12.07.2015 19:00:00</div>
<div class="t r" style="left:465px;top:949px;width:300px;font-size:10.7px">4,000</div>
<div class="t r" style="left:571px;top:949px;width:300px;font-size:10.7px">165 269,545</div>
<div class="t r" style="left:1389px;top:949px;width:300px;font-size:10.7px">4,000</div>
<div class="t r" style="left:1502px;top:949px;width:300px;font-size:10.7px">165 269,545</div>
<div class="t" style="left:44px;top:964px;">Отчет о розничных продажах 0В00-000481 от 28.07.2015 19:00:00</div>
<div class="t r" style="left:465px;top:964px;width:300px;font-size:10.7px">3,000</div>
<div class="t r" style="left:571px;top:964px;width:300px;font-size:10.7px">165 269,545</div>
<div class="t r" style="left:1389px;top:964px;width:300px;font-size:10.7px">3,000</div>
<div class="t r" style="left:1502px;top:964px;width:300px;font-size:10.7px">165 269,545</div>
<div class="t" style="left:44px;top:979px;">Отчет о розничных продажах 0В00-000756 от 22.10.2015 19:00:00</div>
<div class="t r" style="left:465px;top:979px;width:300px;font-size:10.7px">1,000</div>
<div class="t r" style="left:571px;top:979px;width:300px;font-size:10.7px">165 269,545</div>
<div class="t r" style="left:1389px;top:979px;width:300px;font-size:10.7px">1,000</div>
<div class="t r" style="left:1502px;top:979px;width:300px;font-size:10.7px">165 269,545</div>
<div class="t" style="left:31px;top:994px;">КПБ бязь детский 110x140 Спокойной ночи , шт</div>
<div class="t r" style="left:379px;top:994px;width:300px;font-size:10.7px">330 539,090</div>
<div class="t r" style="left:465px;top:994px;width:300px;font-size:10.7px">2,000</div>
<div class="t r" style="left:571px;top:994px;width:300px;font-size:10.7px">1 322 156,360</div>
<div class="t r" style="left:1005px;top:994px;width:300px;font-size:10.7px">2,000</div>
<div class="t r" style="left:1111px;top:994px;width:300px;font-size:10.7px">165 269,545</div>
<div class="t r" style="left:1303px;top:994px;width:300px;font-size:10.7px">661 078,180</div>
<div class="t r" style="left:1389px;top:994px;width:300px;font-size:10.7px">4,000</div>
<div class="t r" style="left:1502px;top:994px;width:300px;font-size:10.7px">2 479 043,175</div>
<div class="t" style="left:44px;top:1009px;">Поступление товаров и услуг 0000-000107 от 11.03.2015 13:22:37</div>
<div class="t r" style="left:1197px;top:1009px;width:300px;font-size:10.7px">6,000</div>
<div class="t r" style="left:1303px;top:1009px;width:300px;font-size:10.7px">165 269,545</div>
<div class="t r" style="left:1389px;top:1009px;width:300px;font-size:10.7px">6,000</div>
<div class="t r" style="left:1502px;top:1009px;width:300px;font-size:10.7px">165 269,545</div>
<div class="t" style="left:44px;top:1024px;">Перемещение товаров 0000-000164 от 13.03.2015 15:32:01</div>
<div class="t r" style="left:273px;top:1024px;width:300px;font-size:10.7px">6,000</div>
<div class="t r" style="left:379px;top:1024px;width:300px;font-size:10.7px">165 269,545</div>
<div class="t r" style="left:1303px;top:1024px;width:300px;font-size:10.7px">165 269,545</div>
<div class="t r" style="left:1389px;top:1024px;width:300px;font-size:10.7px">6,000</div>
<div class="t r" style="left:1502px;top:1024px;width:300px;font-size:10.7px">330 539,090</div>
<div style="left:3px;top:46px;width:11px;height:11px;border:1px solid #C9BD97;border-radius:2px;background:linear-gradient(180deg,#fff 0,#FCF9EE 100%)"></div>
<div style="left:5px;top:51px;width:7px;height:1px;background:#4A3200"></div>
<div style="left:8px;top:57px;width:1px;height:34px;background:#BCB08A"></div>
<div style="left:8px;top:90px;width:5px;height:1px;background:#BCB08A"></div>
<div style="left:0px;top:153px;width:28px;height:1px;background:#BCB38E"></div>
<div style="left:3px;top:156px;width:11px;height:11px;border:1px solid #C9BD97;border-radius:2px;background:linear-gradient(180deg,#fff 0,#FCF9EE 100%)"></div>
<div style="left:5px;top:161px;width:7px;height:1px;background:#4A3200"></div>
<div style="left:8px;top:167px;width:1px;height:106px;background:#BCB08A"></div>
<div style="left:8px;top:273px;width:5px;height:1px;background:#BCB08A"></div>
<div style="left:3px;top:276px;width:11px;height:11px;border:1px solid #C9BD97;border-radius:2px;background:linear-gradient(180deg,#fff 0,#FCF9EE 100%)"></div>
<div style="left:5px;top:281px;width:7px;height:1px;background:#4A3200"></div>
<div style="left:8px;top:287px;width:1px;height:106px;background:#BCB08A"></div>
<div style="left:8px;top:393px;width:5px;height:1px;background:#BCB08A"></div>
<div style="left:3px;top:396px;width:11px;height:11px;border:1px solid #C9BD97;border-radius:2px;background:linear-gradient(180deg,#fff 0,#FCF9EE 100%)"></div>
<div style="left:5px;top:401px;width:7px;height:1px;background:#4A3200"></div>
<div style="left:8px;top:407px;width:1px;height:91px;background:#BCB08A"></div>
<div style="left:8px;top:498px;width:5px;height:1px;background:#BCB08A"></div>
<div style="left:3px;top:501px;width:11px;height:11px;border:1px solid #C9BD97;border-radius:2px;background:linear-gradient(180deg,#fff 0,#FCF9EE 100%)"></div>
<div style="left:5px;top:506px;width:7px;height:1px;background:#4A3200"></div>
<div style="left:8px;top:512px;width:1px;height:61px;background:#BCB08A"></div>
<div style="left:8px;top:573px;width:5px;height:1px;background:#BCB08A"></div>
<div style="left:3px;top:576px;width:11px;height:11px;border:1px solid #C9BD97;border-radius:2px;background:linear-gradient(180deg,#fff 0,#FCF9EE 100%)"></div>
<div style="left:5px;top:581px;width:7px;height:1px;background:#4A3200"></div>
<div style="left:8px;top:587px;width:1px;height:166px;background:#BCB08A"></div>
<div style="left:8px;top:753px;width:5px;height:1px;background:#BCB08A"></div>
<div style="left:3px;top:756px;width:11px;height:11px;border:1px solid #C9BD97;border-radius:2px;background:linear-gradient(180deg,#fff 0,#FCF9EE 100%)"></div>
<div style="left:5px;top:761px;width:7px;height:1px;background:#4A3200"></div>
<div style="left:8px;top:767px;width:1px;height:106px;background:#BCB08A"></div>
<div style="left:8px;top:873px;width:5px;height:1px;background:#BCB08A"></div>
<div style="left:3px;top:876px;width:11px;height:11px;border:1px solid #C9BD97;border-radius:2px;background:linear-gradient(180deg,#fff 0,#FCF9EE 100%)"></div>
<div style="left:5px;top:881px;width:7px;height:1px;background:#4A3200"></div>
<div style="left:8px;top:887px;width:1px;height:106px;background:#BCB08A"></div>
<div style="left:8px;top:993px;width:5px;height:1px;background:#BCB08A"></div>
<div style="left:3px;top:996px;width:11px;height:11px;border:1px solid #C9BD97;border-radius:2px;background:linear-gradient(180deg,#fff 0,#FCF9EE 100%)"></div>
<div style="left:5px;top:1001px;width:7px;height:1px;background:#4A3200"></div>
<div style="left:8px;top:1007px;width:1px;height:42px;background:#BCB08A"></div>
<div style="left:8px;top:1049px;width:5px;height:1px;background:#BCB08A"></div>
</div>
<div style="left:1884px;top:92px;width:1px;height:1045px;background:#BFB68F"></div>
<div style="left:1885px;top:92px;width:15px;height:1029px;background:#F9F8F2"></div>
<div style="left:1885px;top:92px;width:15px;height:21px;background:linear-gradient(90deg,#FBFAF0,#EEE8D0);border-bottom:1px solid #C8BE9A"></div>
<svg style="left:1888px;top:98px" width="9" height="7"><path d="M4.5 0.5 L8.5 6.5 L0.5 6.5Z" fill="#CAC7B8"/></svg>
<div style="left:1885px;top:113px;width:15px;height:81px;background:linear-gradient(90deg,#FCFAEE,#F0E8CA 60%,#E8DEB8);border-bottom:1px solid #C8BE9A"></div>
<div style="left:1890px;top:151px;width:5px;height:5px;border-radius:50%;background:radial-gradient(circle at 40% 40%,#cfcbb8 0,#d8d4c2 50%,#efe9d4 100%)"></div>
<div style="left:1885px;top:1100px;width:15px;height:22px;background:linear-gradient(90deg,#FBFAF0,#EEE8D0);border-top:1px solid #C8BE9A;border-bottom:1px solid #C8BE9A"></div>
<svg style="left:1889px;top:1108px" width="8" height="7"><defs><linearGradient id="sba" x1="0" y1="0" x2="0" y2="1"><stop offset="0" stop-color="#4A4A4A"/><stop offset="1" stop-color="#A8A8A8"/></linearGradient></defs><path d="M0 0 L8 0 L4 7Z" fill="url(#sba)"/></svg>
<div style="left:20px;top:1121px;width:1865px;height:1px;background:#BFB68F"></div>
<div style="left:20px;top:1122px;width:1865px;height:15px;background:#F9F8F2"></div>
<div style="left:20px;top:1122px;width:21px;height:15px;background:linear-gradient(180deg,#FBFAF0,#EEE8D0);border-right:1px solid #C8BE9A"></div>
<svg style="left:26px;top:1125px" width="7" height="9"><path d="M6.5 0.5 L6.5 8.5 L0.5 4.5Z" fill="#CAC7B8"/></svg>
<div style="left:41px;top:1122px;width:1274px;height:15px;background:linear-gradient(180deg,#FCFAEE,#F0E8CA 60%,#E8DEB8);border-right:1px solid #C8BE9A"></div>
<div style="left:675px;top:1127px;width:5px;height:5px;border-radius:50%;background:radial-gradient(circle at 40% 40%,#cfcbb8 0,#d8d4c2 50%,#efe9d4 100%)"></div>
<div style="left:1863px;top:1122px;width:21px;height:15px;background:linear-gradient(180deg,#FBFAF0,#EEE8D0);border-left:1px solid #C8BE9A"></div>
<div style="left:1884px;top:1121px;width:1px;height:16px;background:#BFB68F"></div>
<div style="left:1885px;top:1122px;width:15px;height:15px;background:#F9F8F2"></div>
<svg style="left:1871px;top:1126px" width="7" height="8"><defs><linearGradient id="sbb" x1="0" y1="0" x2="1" y2="0"><stop offset="0" stop-color="#4A4A4A"/><stop offset="1" stop-color="#A8A8A8"/></linearGradient></defs><path d="M0 0 L7 4 L0 8Z" fill="url(#sbb)"/></svg>
<div style="left:2px;top:1160px;width:51px;height:38px;border-top:1px solid #fff;border-left:1px solid #fff;border-right:1px solid #404040;border-bottom:1px solid #404040;box-shadow:inset -1px -1px #808080"></div>
<div class="t" style="left:21px;top:1171px;font-size:12px;font-weight:bold;line-height:15px">Пуск</div>
<div style="left:312px;top:1160px;width:48px;height:38px;border-top:1px solid #fff;border-left:1px solid #fff;border-right:1px solid #404040;border-bottom:1px solid #404040;box-shadow:inset -1px -1px #808080"></div>
<div style="left:362px;top:1160px;width:48px;height:38px;border-top:1px solid #fff;border-left:1px solid #fff;border-right:1px solid #404040;border-bottom:1px solid #404040;box-shadow:inset -1px -1px #808080"></div>
<div style="left:412px;top:1160px;width:48px;height:38px;border-top:1px solid #fff;border-left:1px solid #fff;border-right:1px solid #404040;border-bottom:1px solid #404040;box-shadow:inset -1px -1px #808080"></div>
<div style="left:462px;top:1160px;width:43px;height:38px;border-top:1px solid #404040;border-left:1px solid #404040;border-right:1px solid #D4D0C8;border-bottom:1px solid #fff;background:#fff;box-shadow:inset 1px 1px #404040"></div>
<div style="left:1688px;top:1160px;width:230px;height:38px;border-top:1px solid #808080;border-left:1px solid #808080;border-right:1px solid #fff;border-bottom:1px solid #fff"></div>
<div class="t" style="left:1850px;top:1164px;font-size:12px;line-height:15px">22:46</div>
<div class="t" style="left:1836px;top:1180px;font-size:11.5px;line-height:15px">25.08.2016</div>
<svg style="left:8px;top:5px" width="16" height="16" viewBox="0 0 16 16"><defs><linearGradient id="g1c" x1="0" y1="0" x2="0" y2="1"><stop offset="0" stop-color="#FFFDF0"/><stop offset="0.35" stop-color="#FFF7B0"/><stop offset="0.62" stop-color="#FFE830"/><stop offset="1" stop-color="#FFE000"/></linearGradient></defs><circle cx="8" cy="8" r="7.4" fill="url(#g1c)" stroke="#B08870" stroke-width="0.9"/><path d="M2.2 4.8 L5.3 3.8 L5.3 10.2 L3.8 10.2 L3.8 6 L2.5 6.3Z" fill="#E80000"/><path d="M10.8 5.2 Q10 3.6 8.6 3.6 Q6 3.6 6 6.9 Q6 10 8.6 10 L13.8 10 L13.8 8.6 L8.8 8.6 Q7.5 8.6 7.5 6.9 Q7.5 5 8.7 5 Q9.4 5 9.8 5.8Z" fill="#E80000"/></svg>
<svg style="left:33px;top:6px" width="15" height="15" viewBox="0 0 15 15"><defs><linearGradient id="gdd" x1="0" y1="0" x2="0" y2="1"><stop offset="0" stop-color="#FFF0D8"/><stop offset="0.5" stop-color="#FBC070"/><stop offset="1" stop-color="#F5A020"/></linearGradient></defs><circle cx="7.5" cy="7.5" r="7" fill="url(#gdd)" stroke="#8E8A86" stroke-width="0.8"/><path d="M3.2 5.8 L11.8 5.8 L7.5 10.8Z" fill="#5C4A30"/></svg>
<div style="left:54px;top:3px;width:2px;height:16px;background:linear-gradient(90deg,#8C8C8C 0,#8C8C8C 1px,#F4F4F4 1px)"></div>
<svg style="left:60px;top:6px" width="15" height="15" viewBox="0 0 15 15"><defs><linearGradient id="gst" x1="0" y1="0" x2="0" y2="1"><stop offset="0" stop-color="#FFF0C0"/><stop offset="0.6" stop-color="#F9B540"/><stop offset="1" stop-color="#F0A030"/></linearGradient></defs><path d="M7.50 0.90 L9.38 5.61 L14.44 5.94 L10.54 9.19 L11.79 14.11 L7.50 11.40 L3.21 14.11 L4.46 9.19 L0.56 5.94 L5.62 5.61Z" fill="url(#gst)" stroke="#5A5A5A" stroke-width="0.9" stroke-linejoin="round"/></svg>
<div style="left:82px;top:3px;width:2px;height:16px;background:linear-gradient(90deg,#8C8C8C 0,#8C8C8C 1px,#F4F4F4 1px)"></div>
<svg style="left:1591px;top:5px" width="15" height="15" viewBox="0 0 15 15"><defs><linearGradient id="gsv1" x1="0" y1="0" x2="0" y2="1"><stop offset="0" stop-color="#D6E8F6"/><stop offset="1" stop-color="#A4C2DC"/></linearGradient></defs><rect x="0.5" y="0.5" width="14" height="14" rx="1.5" fill="url(#gsv1)" stroke="#5F7E99"/><rect x="3" y="1" width="9" height="5.5" fill="#fff"/><rect x="4" y="2.3" width="7" height="0.8" fill="#9EC4DC"/><rect x="4" y="4.3" width="7" height="0.8" fill="#9EC4DC"/><rect x="3.5" y="9" width="8" height="5.5" fill="#F4F4F4"/><rect x="10" y="9.5" width="1.5" height="4.5" fill="#C8C8C8"/><rect x="5" y="10" width="2" height="3.5" fill="#2F3C48"/></svg>
<svg style="left:1615px;top:6px" width="15" height="14" viewBox="0 0 15 14"><rect x="4" y="0.5" width="7" height="5" fill="#fff" stroke="#8A8F98"/><rect x="0.5" y="4" width="14" height="7.5" rx="1.5" fill="#F2EEEA" stroke="#8C8C8C"/><rect x="1.5" y="7" width="12" height="1" fill="#C8A890"/><circle cx="9" cy="7.5" r="0.9" fill="#E02020"/><circle cx="11.5" cy="7.5" r="0.9" fill="#20B020"/><rect x="4" y="9.5" width="7" height="2.5" fill="#111"/><rect x="4" y="12" width="7" height="1.5" fill="#fff" stroke="#777" stroke-width="0.6"/></svg>
<svg style="left:1637px;top:5px" width="15" height="15" viewBox="0 0 15 15"><defs><linearGradient id="gpv1" x1="0" y1="0" x2="0" y2="1"><stop offset="0" stop-color="#FFFFFF"/><stop offset="1" stop-color="#CFE0F2"/></linearGradient></defs><path d="M0.5 0.5 L9 0.5 L12.5 4 L12.5 14 L0.5 14Z" fill="url(#gpv1)" stroke="#6A8DB0"/><path d="M9 0.5 L9 4 L12.5 4" fill="#fff" stroke="#6A8DB0" stroke-width="0.8"/><circle cx="9.2" cy="9.4" r="3.3" fill="#D6E6FA" stroke="#9A6A4A" stroke-width="1.3"/><path d="M11.4 11.6 L14.2 14.4" stroke="#8A5A3A" stroke-width="2.2" stroke-linecap="round"/></svg>
<div style="left:1659px;top:3px;width:2px;height:16px;background:linear-gradient(90deg,#8C8C8C 0,#8C8C8C 1px,#F4F4F4 1px)"></div>
<svg style="left:1665px;top:5px" width="17" height="16" viewBox="0 0 17 16"><defs><linearGradient id="gsa" x1="0" y1="0" x2="0" y2="1"><stop offset="0" stop-color="#FFF0C0"/><stop offset="1" stop-color="#F7B040"/></linearGradient></defs><path d="M7.50 0.50 L9.50 5.25 L14.63 5.68 L10.73 9.05 L11.91 14.07 L7.50 11.40 L3.09 14.07 L4.27 9.05 L0.37 5.68 L5.50 5.25Z" fill="url(#gsa)" stroke="#6A6A6A" stroke-width="0.9" stroke-linejoin="round"/><path d="M8 9.5 L12 9.5 L12 7 L16 11 L12 15 L12 12.5 L8 12.5Z" fill="#9BE070" stroke="#2E8A1E" stroke-width="1"/></svg>
<svg style="left:1690px;top:6px" width="12" height="14" viewBox="0 0 12 14"><path d="M0.5 0.5 L9 0.5 L11.5 3 L11.5 13.5 L0.5 13.5Z" fill="#D8DCE2" stroke="#BCC6D0"/><path d="M6.00 3.00 L7.18 5.88 L10.28 6.11 L7.90 8.12 L8.65 11.14 L6.00 9.50 L3.35 11.14 L4.10 8.12 L1.72 6.11 L4.82 5.88Z" fill="#D6CDB6" stroke="#B8B0A0" stroke-width="0.6"/></svg>
<div style="left:1710px;top:3px;width:2px;height:16px;background:linear-gradient(90deg,#8C8C8C 0,#8C8C8C 1px,#F4F4F4 1px)"></div>
<svg style="left:1717px;top:5px" width="13" height="15" viewBox="0 0 13 15"><rect x="0.5" y="0.5" width="12" height="13.5" fill="#FBF0D8" stroke="#98A0A8"/><rect x="1.5" y="1.5" width="10" height="2" fill="#3A9A30"/><rect x="2" y="5.0" width="1.6" height="1.2" fill="#333"/><rect x="5" y="5.0" width="1.6" height="1.2" fill="#333"/><rect x="8" y="5.0" width="1.6" height="1.2" fill="#333"/><rect x="2" y="7.5" width="1.6" height="1.2" fill="#333"/><rect x="5" y="7.5" width="1.6" height="1.2" fill="#333"/><rect x="8" y="7.5" width="1.6" height="1.2" fill="#333"/><rect x="2" y="10.0" width="1.6" height="1.2" fill="#333"/><rect x="5" y="10.0" width="1.6" height="1.2" fill="#333"/><rect x="8" y="10.0" width="1.6" height="1.2" fill="#333"/><rect x="2" y="12.5" width="1.6" height="1.2" fill="#333"/><rect x="5" y="12.5" width="1.6" height="1.2" fill="#333"/><rect x="8" y="12.5" width="1.6" height="1.2" fill="#333"/><rect x="9" y="4.8" width="1.6" height="1.6" fill="#D02020"/></svg>
<svg style="left:1740px;top:5px" width="13" height="15" viewBox="0 0 13 15"><rect x="0.5" y="0.5" width="12" height="13.5" fill="#FFF8F0" stroke="#B0A090"/><rect x="0.5" y="0.5" width="12" height="3" fill="#F0C070"/><rect x="2.5" y="1.3" width="1" height="1" fill="#6A4A20"/><rect x="6" y="1.3" width="1" height="1" fill="#6A4A20"/><rect x="9.5" y="1.3" width="1" height="1" fill="#6A4A20"/><text x="6.5" y="12.5" font-family="Liberation Sans" font-size="9.5" font-weight="bold" fill="#E03020" text-anchor="middle">31</text></svg>
<div style="left:1761px;top:3px;width:2px;height:16px;background:linear-gradient(90deg,#8C8C8C 0,#8C8C8C 1px,#F4F4F4 1px)"></div>
<svg style="left:1770px;top:7px" width="12" height="12" viewBox="0 0 12 12"><text x="0" y="9.5" font-family="Liberation Sans" font-size="12.5" font-weight="bold" fill="#8A5326">M</text></svg>
<svg style="left:1790px;top:7px" width="20" height="12" viewBox="0 0 20 12"><text x="0" y="9.5" font-family="Liberation Sans" font-size="12.5" font-weight="bold" fill="#8A5326">M+</text></svg>
<svg style="left:1813px;top:7px" width="20" height="12" viewBox="0 0 20 12"><text x="0" y="9.5" font-family="Liberation Sans" font-size="12.5" font-weight="bold" fill="#8A5326">M-</text></svg>
<svg style="left:1836px;top:15px" width="8" height="4" viewBox="0 0 8 4"><path d="M0 0 L8 0 L4.0 4Z" fill="#333"/></svg>
<div style="left:1848px;top:3px;width:2px;height:16px;background:linear-gradient(90deg,#8C8C8C 0,#8C8C8C 1px,#F4F4F4 1px)"></div>
<div style="left:1858px;top:15px;width:8px;height:2px;background:#333;box-shadow:0 1px 0 #eee"></div>
<svg style="left:1877px;top:8px" width="12" height="10" viewBox="0 0 12 10"><path d="M3 1 L11 1 L11 7" fill="none" stroke="#333" stroke-width="1"/><rect x="2.5" y="0" width="9" height="2" fill="#333"/><path d="M10.5 1.5 L10.5 6.5 L9 6.5" fill="none" stroke="#333"/><rect x="0.5" y="3.5" width="8.5" height="6" fill="#ddd" stroke="#333"/><rect x="0" y="3" width="9.5" height="2" fill="#333"/></svg>
<svg style="left:1899px;top:8px" width="10" height="10" viewBox="0 0 10 10"><path d="M1.2 1.2 L8.8 8.8 M8.8 1.2 L1.2 8.8" stroke="#333" stroke-width="2.2"/></svg>
<svg style="left:28px;top:68px" width="10" height="11" viewBox="0 0 10 11"><defs><linearGradient id="gpl" x1="0" y1="0" x2="0" y2="1"><stop offset="0" stop-color="#5CD020"/><stop offset="1" stop-color="#3A9A18"/></linearGradient></defs><path d="M0.5 0.5 L9.5 5.5 L0.5 10.5Z" fill="url(#gpl)" stroke="#3E4A5A" stroke-width="0.9" stroke-linejoin="round"/></svg>
<svg style="left:148px;top:66px" width="15" height="15" viewBox="0 0 15 15"><defs><radialGradient id="gmg" cx="0.5" cy="0.5" r="0.5"><stop offset="0" stop-color="#C8DCF8"/><stop offset="1" stop-color="#EEF4FC"/></radialGradient></defs><circle cx="6.2" cy="6.2" r="5" fill="url(#gmg)" stroke="#B38462" stroke-width="1.2"/><path d="M9.8 9.8 L13.2 13.4" stroke="#A8704A" stroke-width="3" stroke-linecap="round"/><path d="M9.9 9.9 L13 13.2" stroke="#E8C09A" stroke-width="1.3" stroke-linecap="round"/></svg>
<svg style="left:218px;top:64px" width="17" height="17" viewBox="0 0 17 17"><rect x="0.5" y="1.5" width="4" height="4" fill="none" stroke="#333" stroke-width="1"/><path d="M0.5 3.5 L4.5 3.5 M2.5 1.5 L2.5 5.5" stroke="#333" stroke-width="1"/><path d="M3.5 6.5 L3.5 14.5 L12 14.5" fill="none" stroke="#5A80A8" stroke-width="1"/><rect x="4" y="6" width="7.5" height="8" fill="#EAF2FB"/><text x="5.6" y="5.6" font-family="Liberation Sans" font-weight="bold" font-size="6.6" fill="#12395E">A</text><path d="M11.2 1.6 L13.2 4.6" stroke="#7AA4D0" stroke-width="1.1" stroke-dasharray="1 0.6"/><text x="8.8" y="11.4" font-family="Liberation Sans" font-size="6.4" fill="#6A6A6A">B</text><text x="11.6" y="16.6" font-family="Liberation Sans" font-size="6.2" fill="#7A7A7A">C</text></svg>
<svg style="left:241px;top:64px" width="17" height="17" viewBox="0 0 17 17"><path d="M0 2 L5 2 M0 4.5 L5 4.5" stroke="#222" stroke-width="1.1"/><path d="M0.5 2 L0.5 12.5 L2 13.5" fill="none" stroke="#666" stroke-width="0.9"/><path d="M3.5 6.5 L3.5 14.5 L12 14.5" fill="none" stroke="#5A80A8" stroke-width="1"/><rect x="4" y="6" width="7.5" height="8" fill="#EAF2FB"/><text x="5.6" y="5.6" font-family="Liberation Sans" font-weight="bold" font-size="6.6" fill="#12395E">A</text><path d="M11.2 1.6 L13.2 4.6" stroke="#7AA4D0" stroke-width="1.1" stroke-dasharray="1 0.6"/><text x="8.8" y="11.4" font-family="Liberation Sans" font-size="6.4" fill="#6A6A6A">B</text><text x="11.6" y="16.6" font-family="Liberation Sans" font-size="6.2" fill="#7A7A7A">C</text></svg>
<svg style="left:270px;top:66px" width="15" height="14" viewBox="0 0 15 14"><rect x="4" y="0.5" width="7" height="5" fill="#fff" stroke="#8A8F98"/><rect x="0.5" y="4" width="14" height="7.5" rx="1.5" fill="#F2EEEA" stroke="#8C8C8C"/><rect x="1.5" y="7" width="12" height="1" fill="#C8A890"/><circle cx="9" cy="7.5" r="0.9" fill="#E02020"/><circle cx="11.5" cy="7.5" r="0.9" fill="#20B020"/><rect x="4" y="9.5" width="7" height="2.5" fill="#111"/><rect x="4" y="12" width="7" height="1.5" fill="#fff" stroke="#777" stroke-width="0.6"/></svg>
<svg style="left:292px;top:65px" width="15" height="15" viewBox="0 0 15 15"><defs><linearGradient id="gpv2" x1="0" y1="0" x2="0" y2="1"><stop offset="0" stop-color="#FFFFFF"/><stop offset="1" stop-color="#CFE0F2"/></linearGradient></defs><path d="M0.5 0.5 L9 0.5 L12.5 4 L12.5 14 L0.5 14Z" fill="url(#gpv2)" stroke="#6A8DB0"/><path d="M9 0.5 L9 4 L12.5 4" fill="#fff" stroke="#6A8DB0" stroke-width="0.8"/><circle cx="9.2" cy="9.4" r="3.3" fill="#D6E6FA" stroke="#9A6A4A" stroke-width="1.3"/><path d="M11.4 11.6 L14.2 14.4" stroke="#8A5A3A" stroke-width="2.2" stroke-linecap="round"/></svg>
<svg style="left:320px;top:65px" width="15" height="15" viewBox="0 0 15 15"><defs><linearGradient id="gsv2" x1="0" y1="0" x2="0" y2="1"><stop offset="0" stop-color="#D6E8F6"/><stop offset="1" stop-color="#A4C2DC"/></linearGradient></defs><rect x="0.5" y="0.5" width="14" height="14" rx="1.5" fill="url(#gsv2)" stroke="#5F7E99"/><rect x="3" y="1" width="9" height="5.5" fill="#fff"/><rect x="4" y="2.3" width="7" height="0.8" fill="#9EC4DC"/><rect x="4" y="4.3" width="7" height="0.8" fill="#9EC4DC"/><rect x="3.5" y="9" width="8" height="5.5" fill="#F4F4F4"/><rect x="10" y="9.5" width="1.5" height="4.5" fill="#C8C8C8"/><rect x="5" y="10" width="2" height="3.5" fill="#2F3C48"/></svg>
<svg style="left:348px;top:68px" width="15" height="11" viewBox="0 0 15 11"><defs><linearGradient id="gev" x1="0" y1="0" x2="0" y2="1"><stop offset="0" stop-color="#FBE39A"/><stop offset="1" stop-color="#E9B243"/></linearGradient></defs><rect x="0.5" y="0.5" width="14" height="9.5" fill="url(#gev)" stroke="#C98C22"/><path d="M1 1 L7.5 6 L14 1 M1 9.5 L5.5 5.2 M14 9.5 L9.5 5.2" fill="none" stroke="#C98C22" stroke-width="0.9"/></svg>
<svg style="left:1631px;top:67px" width="14" height="12" viewBox="0 0 14 12"><rect x="0.5" y="0.5" width="13" height="11" fill="#F4F5FB" stroke="#6877B0" stroke-width="1.2"/><rect x="3" y="3" width="2.2" height="2.2" fill="#4A5CA0"/><rect x="3" y="7" width="2.2" height="2.2" fill="#4A5CA0"/><rect x="6.5" y="3.7" width="4" height="0.9" fill="#888"/><rect x="6.5" y="7.7" width="3" height="0.9" fill="#888"/></svg>
<svg style="left:1763px;top:65px" width="16" height="16" viewBox="0 0 16 16"><rect x="0.5" y="0.5" width="14" height="12" fill="#fff" stroke="#6A87A8"/><rect x="0.5" y="0.5" width="14" height="2.5" fill="#6A87A8"/><path d="M5 1 L5 13 M10 1 L10 13" stroke="#6A87A8"/><path d="M2.5 5 L2.5 12" stroke="#8AA0C0" stroke-dasharray="1 1"/><rect x="9.5" y="5.5" width="2" height="10" fill="#8A8A8A" transform="rotate(0.0 10.5 10.5)"/><rect x="9.5" y="5.5" width="2" height="10" fill="#8A8A8A" transform="rotate(22.5 10.5 10.5)"/><rect x="9.5" y="5.5" width="2" height="10" fill="#8A8A8A" transform="rotate(45.0 10.5 10.5)"/><rect x="9.5" y="5.5" width="2" height="10" fill="#8A8A8A" transform="rotate(67.5 10.5 10.5)"/><circle cx="10.5" cy="10.5" r="3.6" fill="#9A9A9A" stroke="#777" stroke-width="0.6"/><circle cx="10.5" cy="10.5" r="1.2" fill="#ddd"/></svg>
<svg style="left:1864px;top:72px" width="6" height="3" viewBox="0 0 6 3"><path d="M0 0 L6 0 L3.0 3Z" fill="#3F3010"/></svg>
<svg style="left:1881px;top:65px" width="16" height="16" viewBox="0 0 16 16"><defs><linearGradient id="ghp" x1="0" y1="0" x2="0" y2="1"><stop offset="0" stop-color="#FFE9C0"/><stop offset="0.55" stop-color="#F9BC5C"/><stop offset="1" stop-color="#F0A030"/></linearGradient></defs><circle cx="8" cy="8" r="7.4" fill="url(#ghp)" stroke="#9C8C7C" stroke-width="0.9"/><path d="M5.6 6 Q5.6 3.6 8 3.6 Q10.4 3.6 10.4 5.8 Q10.4 7.2 8.8 7.9 Q8 8.3 8 9.6" fill="none" stroke="#6A4020" stroke-width="1.5"/><rect x="7.2" y="10.8" width="1.6" height="1.6" fill="#6A4020"/></svg>
<svg style="left:4px;top:1171px" width="17" height="15" viewBox="0 0 17 15"><defs><linearGradient id="wf1" x1="0" y1="0" x2="0" y2="1"><stop offset="0" stop-color="#F89030"/><stop offset="1" stop-color="#E83A20"/></linearGradient><linearGradient id="wf2" x1="0" y1="0" x2="0" y2="1"><stop offset="0" stop-color="#A8D848"/><stop offset="1" stop-color="#5AA020"/></linearGradient><linearGradient id="wf3" x1="0" y1="0" x2="0" y2="1"><stop offset="0" stop-color="#60B8F0"/><stop offset="1" stop-color="#1A70C8"/></linearGradient><linearGradient id="wf4" x1="0" y1="0" x2="0" y2="1"><stop offset="0" stop-color="#FFE040"/><stop offset="1" stop-color="#F0A010"/></linearGradient></defs><path d="M2.2 1.6 Q4.8 0 8 1.3 L7 7 Q4.2 5.8 1.1 7.2Z" fill="url(#wf1)"/><path d="M8.6 1.5 Q11.8 2.8 16 1.2 L15 6.8 Q11.3 8.3 7.6 7.1Z" fill="url(#wf2)"/><path d="M1 7.9 Q4 6.6 6.9 7.8 L5.9 13.5 Q3 12.3 0 13.7Z" fill="url(#wf3)"/><path d="M7.5 7.9 Q11.2 9.1 14.9 7.6 L13.9 13.3 Q10.2 14.9 6.5 13.6Z" fill="url(#wf4)"/></svg>
<svg style="left:70px;top:1162px" width="32" height="32" viewBox="0 0 32 32"><defs><radialGradient id="gie" cx="0.5" cy="0.45" r="0.55"><stop offset="0" stop-color="#E8FCFF"/><stop offset="0.45" stop-color="#6ED8FA"/><stop offset="1" stop-color="#1580D0"/></radialGradient></defs><g transform="translate(16.5 16) rotate(-42)"><ellipse rx="16" ry="5.2" fill="none" stroke="#F0B000" stroke-width="2.2"/></g><circle cx="16.5" cy="16.5" r="12.3" fill="url(#gie)"/><path d="M10.2 14.6 Q11 8.3 17 8.2 Q22.6 8.4 23 14.6Z" fill="#D4D0C8"/><path d="M10.2 14.6 Q11 8.3 17 8.2 Q22.6 8.4 23 14.6" fill="none" stroke="#1A7AC8" stroke-width="0.8"/><path d="M10 18.2 L29.5 18.2 L29.5 23.4 L23.6 23.4 Q21.8 25.5 17 25.3 Q11.2 25 10 18.2Z" fill="#D4D0C8"/><path d="M10 18.2 L23.6 18.2 M23.6 23.4 Q21.8 25.5 17 25.3 Q11.2 25 10 18.2" fill="none" stroke="#1A7AC8" stroke-width="0.8"/><g transform="translate(16.5 16) rotate(-42)"><path d="M-16 0 A16 5.2 0 0 1 16 0" fill="none" stroke="#F6C000" stroke-width="2.4"/><path d="M-15 -0.8 A15 4.4 0 0 1 15 -0.8" fill="none" stroke="#FFE890" stroke-width="0.8"/></g></svg>
<svg style="left:120px;top:1163px" width="32" height="30" viewBox="0 0 32 30"><defs><linearGradient id="gfd" x1="0" y1="0" x2="0" y2="1"><stop offset="0" stop-color="#FFF3C0"/><stop offset="1" stop-color="#E8C060"/></linearGradient></defs><path d="M1 4 L11 4 L13 6 L31 6 L31 26 L1 26Z" fill="#E8C868" stroke="#C8A040"/><rect x="3" y="2" width="5" height="3" fill="#fff"/><rect x="4" y="2.5" width="3" height="1.5" fill="#20B020"/><rect x="12" y="3.5" width="6" height="3" fill="#fff"/><rect x="13" y="4" width="3" height="1.5" fill="#D02020"/><rect x="20" y="4.5" width="8" height="3" fill="#fff"/><rect x="21" y="5" width="3" height="1.5" fill="#2080E0"/><path d="M0.5 10 L31.5 10 L31 26 L1 26Z" fill="url(#gfd)" stroke="#C8A040"/><path d="M5 16 L26 16 L26 28 L21 28 L21 22 L10 22 L10 28 L5 28Z" fill="#9ED0F0" stroke="#5A9AD0"/></svg>
<svg style="left:172px;top:1164px" width="30" height="28" viewBox="0 0 30 28"><defs><radialGradient id="gwm" cx="0.5" cy="0.5" r="0.5"><stop offset="0" stop-color="#FFB060"/><stop offset="1" stop-color="#E05A10"/></radialGradient></defs><rect x="6" y="3" width="22" height="23" fill="#D8ECFA" stroke="#9CC4E4"/><rect x="3" y="1" width="22" height="24" fill="#B8DCF8" stroke="#7AB0DC"/><circle cx="14" cy="13" r="8.5" fill="url(#gwm)"/><path d="M11 8.5 L19 13 L11 17.5Z" fill="#fff"/></svg>
<svg style="left:221px;top:1164px" width="30" height="30" viewBox="0 0 30 30"><path d="M15 15 L2.4 7.2 A14.5 14.5 0 0 1 27.6 7.6 L15 8.2Z" fill="#DB4437"/><path d="M15 15 L27.6 7.6 A14.5 14.5 0 0 1 13.5 29.4Z" fill="#FCC934"/><path d="M15 15 L13.5 29.4 A14.5 14.5 0 0 1 2.4 7.2Z" fill="#1DA362"/><path d="M15 8.2 L27.6 7.6 L15 15Z" fill="#DB4437"/><circle cx="15" cy="15" r="6.9" fill="#fff"/><circle cx="15" cy="15" r="5.4" fill="#4A8AF4"/></svg>
<svg style="left:271px;top:1164px" width="30" height="31" viewBox="0 0 30 31"><defs><linearGradient id="gop" x1="0" y1="0" x2="0" y2="1"><stop offset="0" stop-color="#FF3A3A"/><stop offset="1" stop-color="#B80A1E"/></linearGradient></defs><ellipse cx="15" cy="15" rx="14.5" ry="15" fill="url(#gop)"/><ellipse cx="15" cy="15.5" rx="7.5" ry="11" fill="#D4D0C8"/></svg>
<svg style="left:321px;top:1164px" width="31" height="31" viewBox="0 0 31 31"><defs><radialGradient id="gff" cx="0.6" cy="0.4" r="0.5"><stop offset="0" stop-color="#7AD8FF"/><stop offset="0.5" stop-color="#2A7AD0"/><stop offset="1" stop-color="#1A2A80"/></radialGradient><linearGradient id="gff2" x1="0" y1="0" x2="0.3" y2="1"><stop offset="0" stop-color="#FFD040"/><stop offset="0.5" stop-color="#FF8A10"/><stop offset="1" stop-color="#D03A10"/></linearGradient></defs><circle cx="16.5" cy="13.5" r="11.5" fill="url(#gff)"/><path d="M2.5 11 Q1 22 8.5 27.5 Q16 31.5 23.5 28 Q29 24.5 29.5 17 Q26 24.5 18 24.8 Q9.5 24.5 8.5 16.5 Q8.5 12.5 12.5 11 Q10 9.5 10 7 Q7 6.5 5.5 3.5 Q3.2 6.5 2.5 11Z" fill="url(#gff2)"/><path d="M18 1.5 Q26 2.5 29 10 Q30.5 14 29.5 17 Q28 10 22 7.5 Q20.5 4 18 1.5Z" fill="#F39020"/><path d="M12.5 11 Q15 10 16 12 Q13.5 13.5 12.5 11Z" fill="#FFB030"/></svg>
<svg style="left:370px;top:1163px" width="32" height="32" viewBox="0 0 32 32"><path d="M0.5 1.5 Q0.5 0.5 1.5 0.5 L29 0.5 L31.5 3 L31.5 29 Q31.5 30.5 30 30.5 L1.5 30.5 Q0.5 30.5 0.5 29.5Z" fill="#1E4FC8" stroke="#1A3A90"/><rect x="9" y="0.5" width="14" height="9" fill="#D8D8D8"/><rect x="17" y="2" width="4" height="6" fill="#1E4FC8"/><rect x="4" y="14" width="24" height="16" fill="#fff"/><path d="M6 17 L26 17 M6 21 L26 21 M6 25 L16 25" stroke="#E02020" stroke-width="1.2"/><rect x="4" y="28" width="24" height="2" fill="#E02020"/><text x="17" y="27.5" font-family="Liberation Sans" font-size="6.5" fill="#333">64</text></svg>
<svg style="left:421px;top:1163px" width="30" height="31" viewBox="0 0 30 31"><defs><linearGradient id="grd" x1="0" y1="0" x2="1" y2="0.6"><stop offset="0" stop-color="#2030C0"/><stop offset="0.5" stop-color="#3A7AF0"/><stop offset="1" stop-color="#D0E8FF"/></linearGradient></defs><path d="M2 2 L26 5 L25 21 L2 19Z" fill="url(#grd)" stroke="#aab" stroke-width="0.8"/><ellipse cx="12" cy="27" rx="8" ry="3" fill="#D8DCE0"/><circle cx="22" cy="23" r="7" fill="#E8ECEE" stroke="#9AA" stroke-width="1"/><path d="M19 22 L22 20 M19 22 L22 24 M25 24 L22 22 M25 24 L22 26" stroke="#2A9A2A" stroke-width="1.4"/></svg>
<svg style="left:470px;top:1164px" width="30" height="30" viewBox="0 0 30 30"><defs><linearGradient id="g1b" x1="0" y1="0" x2="0" y2="1"><stop offset="0" stop-color="#FFFDF0"/><stop offset="0.3" stop-color="#FFF4A8"/><stop offset="0.55" stop-color="#F2CC30"/><stop offset="0.75" stop-color="#E8BC50"/><stop offset="1" stop-color="#F0D8A0"/></linearGradient></defs><circle cx="14.5" cy="15" r="14.2" fill="url(#g1b)" stroke="#E0C060" stroke-width="0.6"/><path d="M3.5 9 L9.5 9 L9.5 19.5 L6.5 19.5 L6.5 11.5 L3.5 11.5Z" fill="#F07A20" stroke="#F00000" stroke-width="1"/><path d="M20.5 10.5 Q19 8.5 16 8.5 Q11 8.5 11 14 Q11 19.5 16.5 19.5 L28 19.5 L28 16.5 L16.5 16.5 Q14 16.5 14 14 Q14 11.5 16.2 11.5 Q17.6 11.5 18.3 12.5Z" fill="#F07A20" stroke="#F00000" stroke-width="1"/></svg>
<svg style="left:1694px;top:1172px" width="7" height="9" viewBox="0 0 7 9"><path d="M0.8 4 L3.5 1.2 L6.2 4 M0.8 8 L3.5 5.2 L6.2 8" fill="none" stroke="#000" stroke-width="1.6"/></svg><svg style="left:1711px;top:1171px" width="17" height="17" viewBox="0 0 17 17"><rect x="0.5" y="0.5" width="2.5" height="15.5" rx="1" fill="#fff" stroke="#777" stroke-width="0.9"/><path d="M3 1.5 Q7 0.5 9 2.5 Q11 4 15.5 5 Q14.5 8.5 11.5 9 Q8 9.2 7 8.5 Q5 8 3 8.5Z" fill="#fff" stroke="#777" stroke-width="0.9"/></svg><svg style="left:1735px;top:1171px" width="17" height="17" viewBox="0 0 17 17"><rect x="4.5" y="2.5" width="12" height="10" fill="#9A9A98" stroke="#666" stroke-width="0.9"/><rect x="6" y="4" width="9" height="7" fill="#B8B6B0"/><rect x="6" y="13.5" width="9" height="2" fill="#fff" stroke="#777" stroke-width="0.7"/><path d="M1 1 L1 5 Q1 7 3 7 Q5 7 5 5 L5 1 M3 7 L3 16" fill="none" stroke="#fff" stroke-width="1.8"/><path d="M1 1 L1 5 Q1 7 3 7 Q5 7 5 5 L5 1 M3 7 L3 16" fill="none" stroke="#444" stroke-width="0.5"/></svg><div style="left:1759px;top:1171px;width:16px;height:16px;background:#808080"></div><svg style="left:1759px;top:1171px" width="16" height="16" viewBox="0 0 16 16"><text x="1.2" y="12.5" font-family="Liberation Sans" font-size="11" fill="#fff">En</text></svg><svg style="left:1783px;top:1171px" width="16" height="17" viewBox="0 0 16 17"><path d="M0.5 5 L3.5 5 L7.5 0.8 L7.5 15.5 L3.5 11.5 L0.5 11.5Z" fill="#fff" stroke="#777" stroke-width="0.9"/><path d="M10 5 Q11.5 8 10 11.5 M12.5 3 Q15.5 8 12.5 14" fill="none" stroke="#888" stroke-width="1.1"/></svg><svg style="left:1807px;top:1171px" width="17" height="16" viewBox="0 0 17 16"><path d="M2 11 Q0 10 1 7.5 Q2 5.5 4 6 Q4.5 2 8.5 1.8 Q12.5 1.5 13.5 5 Q16 5 16 8 Q16 11 13 11Z" fill="#fff" stroke="#777" stroke-width="0.9"/><path d="M3 8 Q6 5.5 10 6.5" fill="none" stroke="#888" stroke-width="0.8"/><circle cx="11.5" cy="10.5" r="4.8" fill="#22A030"/><path d="M9 10.5 L11 12.5 L14.2 9" fill="none" stroke="#fff" stroke-width="1.6"/></svg><svg style="left:1900px;top:1173px" width="16" height="13" viewBox="0 0 16 13"><rect x="0.5" y="0.5" width="15" height="12" fill="#2F73C8" stroke="#8AB8E8" stroke-width="0.8"/><rect x="1" y="1" width="14" height="6" fill="#5A9BE0"/><rect x="4" y="9" width="11" height="2" fill="#1A2A40"/><rect x="1" y="9" width="2" height="2" fill="#F0A020"/></svg>
<div style="left:506px;top:1160px;width:4px;height:38px;border-top:2px solid #404040;border-left:1px solid #fff;border-right:1px solid #fff;background:#D4D0C8"></div>
</body></html>
